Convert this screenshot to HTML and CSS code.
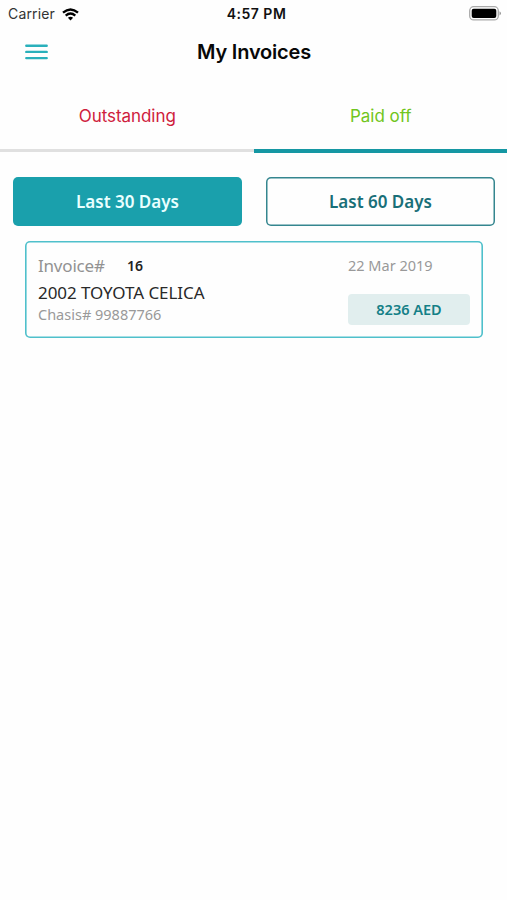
FILE: index.html
```
<!DOCTYPE html>
<html lang="en">
<head>
<meta charset="utf-8">
<title>My Invoices</title>
<link rel="stylesheet" href="styles.css">
</head>
<body>
<div class="status">
  <div class="carrier"><span class="carrier-name">Carrier</span>
    <svg class="wifi" width="17" height="13" viewBox="0 0 17 13" fill="none" stroke="#000" stroke-width="2.3"><path d="M1 4.7Q8.5 -1.8 16 4.7"/><path d="M3.7 7.6Q8.5 3.5 13.3 7.6"/><path d="M8.5 12.5L5.9 9.8Q8.5 7.6 11.1 9.8Z" fill="#000" stroke="none"/></svg>
  </div>
  <span class="time">4:57 PM</span>
  <svg class="battery" width="32" height="15" viewBox="0 0 32 15"><rect x=".7" y=".7" width="28.6" height="13.2" rx="4" fill="#fff" stroke="#aaa" stroke-width="1.3"/><rect x="2.7" y="2.7" width="24.6" height="9.2" rx="2" fill="#000"/><path d="M30.5 5.2Q32 6 32 7.3T30.5 9.4Z" fill="#999"/></svg>
</div>
<header class="header">
  <svg class="menu" width="23" height="16" viewBox="0 0 23 16" stroke="#2ab0bb" stroke-width="2.4" stroke-linecap="round"><path d="M1.3 1.7H21.7M1.3 7.9H21.7M1.3 14.1H21.7"/></svg>
  <h1 class="title"><span>My Invoices</span></h1>
</header>
<nav class="tabs">
  <div class="tab outstanding"><span>Outstanding</span></div>
  <div class="tab paid"><span>Paid off</span></div>
</nav>
<main>
  <div class="filters">
    <button class="filter active"><span>Last 30 Days</span></button>
    <button class="filter"><span>Last 60 Days</span></button>
  </div>
  <article class="card">
    <div class="details">
      <div class="invoice"><span class="label">Invoice#</span><span class="number">16</span></div>
      <div class="vehicle"><span>2002 TOYOTA CELICA</span></div>
      <div class="chassis"><span>Chasis# 99887766</span></div>
    </div>
    <div class="summary">
      <div class="date"><span>22 Mar 2019</span></div>
      <div class="amount"><span>8236 AED</span></div>
    </div>
  </article>
</main>
</body>
</html>
```
FILE: styles.css
```
* { box-sizing: border-box; }
body { margin: 0; min-height: 900px; background: #fefefe; font-family: "Noto Sans", sans-serif; white-space: nowrap; }
.status { height: 28px; display: grid; grid-template-columns: 1fr auto 1fr; align-items: center; padding: 0 6px 0 8px; font: 14px/28px Inter, sans-serif; color: #111; }
.carrier { display: flex; align-items: center; gap: 7px; }
.carrier-name { color: #333; letter-spacing: 0.15px; }
.time { padding-left: 4px; font-weight: 600; letter-spacing: 0.5px; }
.battery { justify-self: end; margin-bottom: 1px; }
.header { height: 48px; display: grid; grid-template-columns: 48px 1fr 48px; align-items: center; }
.menu { margin-left: 25px; }
.title { margin: 0; padding-left: 1px; text-align: center; font: 600 20px/48px Inter, sans-serif; letter-spacing: -0.2px; color: #080808; }
.tabs { height: 77px; display: flex; }
.tab { flex: 1; padding: 28px 0 0 1px; text-align: center; font: 17px/24px Inter, sans-serif; letter-spacing: -0.05px; border-bottom: 3px solid #e0e0e0; height: 76px; }
.outstanding { color: #cf203c; }
.paid { height: 77px; color: #70c520; border-bottom: 4px solid #1597a3; }
.filters { display: flex; gap: 24px; padding: 24px 12px 0 13px; }
.filter { flex: 1; height: 49px; padding: 0; border: 0; box-shadow: inset 0 0 0 1.5px #35868f; border-radius: 5px; background: #fefefe; color: #196f78; font: 600 17px/49px "Noto Sans", sans-serif; }
.filter.active { background: #1aa0ac; box-shadow: none; color: #e9ffff; }
.card { height: 97px; margin: 15px 24px 0 25px; padding: 12px 13px 0 13px; display: flex; justify-content: space-between; box-shadow: inset 0 0 0 1.6px #4fc0cb; border-radius: 5px; }
.invoice { display: flex; height: 26px; line-height: 25px; }
.label { width: 89px; font-size: 17px; letter-spacing: -0.2px; color: #929292; }
.number { font-size: 14px; font-weight: 600; color: #222; }
.vehicle { font-size: 17px; line-height: 28px; height: 25px; letter-spacing: -0.06px; color: #292929; }
.chassis { font-size: 14.5px; line-height: 20px; color: #999; }
.summary { width: 122px; }
.date { font-size: 14.5px; line-height: 25px; color: #999; }
.amount { margin-top: 16px; height: 31px; border-radius: 4px; background: #e1eeee; text-align: center; font-size: 14.5px; line-height: 31px; font-weight: 600; color: #148087; }
```
